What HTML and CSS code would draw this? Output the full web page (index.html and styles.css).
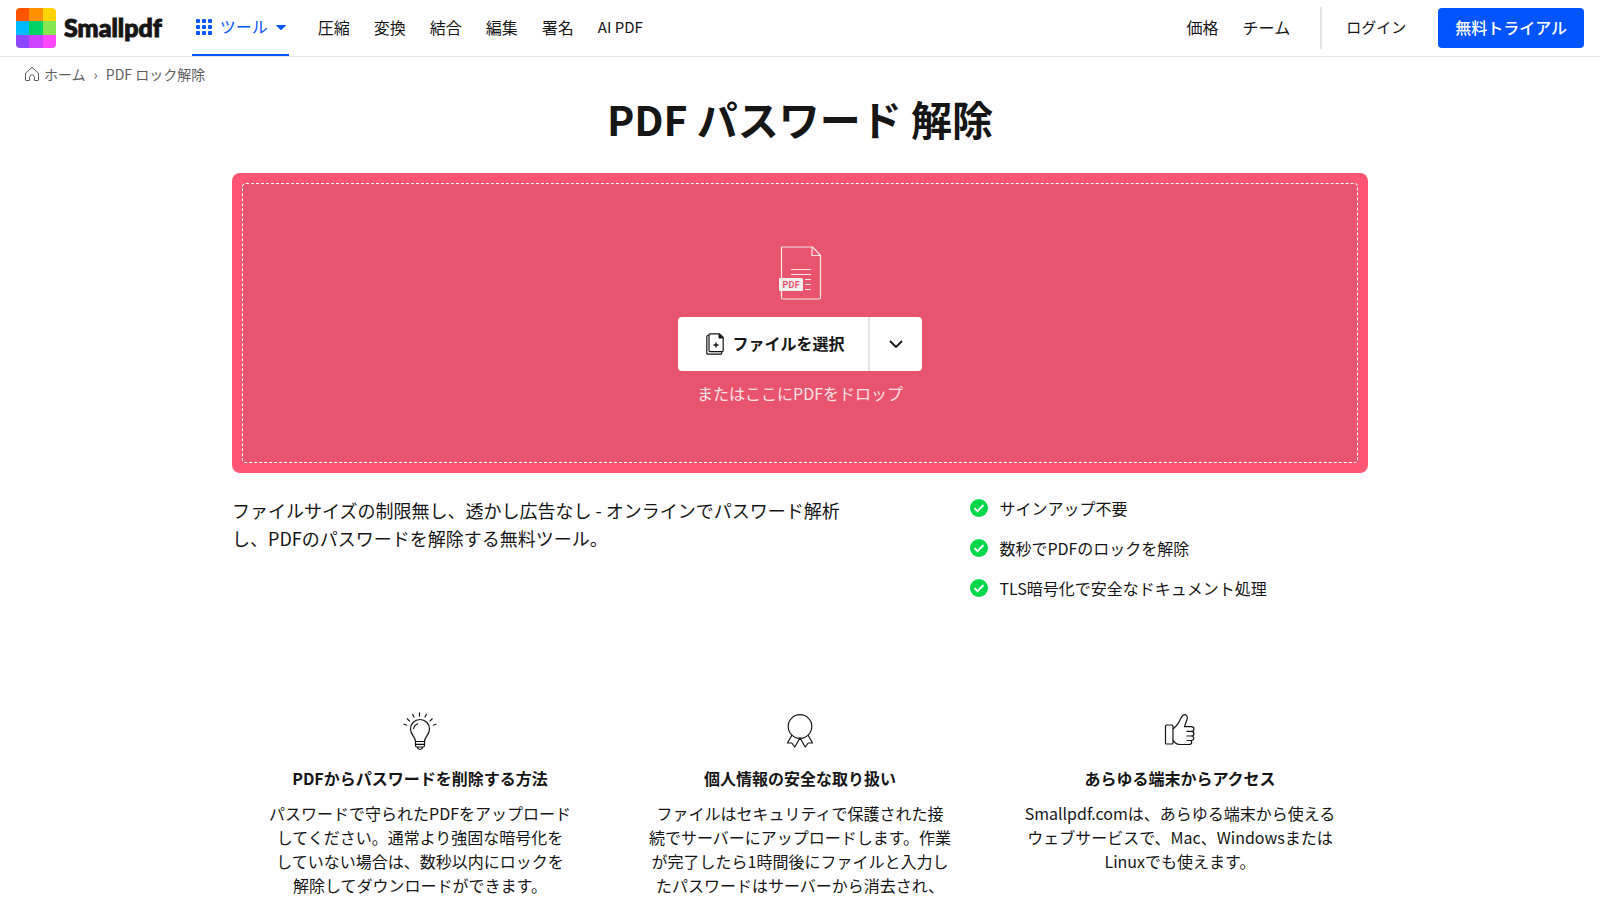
FILE: index.html
```html
<!DOCTYPE html>
<html lang="ja">
<head>
<meta charset="utf-8">
<meta name="viewport" content="width=device-width, initial-scale=1">
<title>PDF パスワード 解除</title>
<link rel="stylesheet" href="styles.css">
</head>
<body>
<header class="header">
  <a class="logo" href="#">
    <svg class="logo-mark" viewBox="0 0 40 40" aria-hidden="true">
      <defs><clipPath id="logo-clip"><rect width="40" height="40" rx="4"/></clipPath></defs>
      <g clip-path="url(#logo-clip)">
        <path fill="#ff5500" d="M0 0h13v13H0z"/><path fill="#ff9100" d="M13 0h14v13H13z"/><path fill="#ffd200" d="M27 0h13v13H27z"/>
        <path fill="#00bbff" d="M0 13h13v14H0z"/><path fill="#00d267" d="M13 13h14v14H13z"/><path fill="#87e650" d="M27 13h13v14H27z"/>
        <path fill="#8c46ff" d="M0 27h13v13H0z"/><path fill="#cd41ff" d="M13 27h14v13H13z"/><path fill="#ff46fa" d="M27 27h13v13H27z"/>
      </g>
    </svg>
    <span class="logo-text">Smallpdf</span>
  </a>
  <nav class="nav" aria-label="メイン">
    <button class="tools" type="button">
      <svg width="16" height="16" viewBox="0 0 16 16" fill="currentColor" aria-hidden="true">
        <rect width="4" height="4" rx="1"/><rect x="6" width="4" height="4" rx="1"/><rect x="12" width="4" height="4" rx="1"/>
        <rect y="6" width="4" height="4" rx="1"/><rect x="6" y="6" width="4" height="4" rx="1"/><rect x="12" y="6" width="4" height="4" rx="1"/>
        <rect y="12" width="4" height="4" rx="1"/><rect x="6" y="12" width="4" height="4" rx="1"/><rect x="12" y="12" width="4" height="4" rx="1"/>
      </svg>
      <span class="tools-label">ツール</span>
      <svg width="10" height="5" viewBox="0 0 10 5" fill="currentColor" aria-hidden="true"><path d="M.5 0h9q.8 0 .2.7L5.500 4.800q-.5.400-1 0L.3.700Q-.3 0 .5 0z"/></svg>
    </button>
    <a href="#">圧縮</a>
    <a href="#">変換</a>
    <a href="#">結合</a>
    <a href="#">編集</a>
    <a href="#">署名</a>
    <a class="ai" href="#">AI PDF</a>
  </nav>
  <div class="account">
    <a href="#">価格</a>
    <a href="#">チーム</a>
    <span class="divider"></span>
    <a class="login" href="#">ログイン</a>
    <a class="trial" href="#">無料トライアル</a>
  </div>
</header>

<nav class="crumbs" aria-label="パンくずリスト">
  <a href="#">
    <svg width="16" height="16" viewBox="0 0 16 16" fill="none" stroke="currentColor" aria-hidden="true"><path d="M1.500 7.200 8 1.500l6.500 5.700v6.800q0 .5-.5.500h-3.500v-3.200a2.500 2.500 0 0 0-5 0v3.200H2q-.5 0-.5-.5z" stroke-linejoin="round"/></svg>
    ホーム</a>
  <span class="crumb-sep">›</span>
  <span>PDF ロック解除</span>
</nav>

<main class="main">
  <h1 class="title">PDF パスワード 解除</h1>

  <section class="drop">
    <div class="drop-inner">
      <svg class="drop-icon" width="44" height="54" viewBox="0 0 44 54" aria-hidden="true">
        <g fill="none" stroke="#f5e6e9" stroke-width="1.200">
          <path d="M3.500 1h31l8 8.500v42q0 1.500-1.500 1.500H5q-1.500 0-1.500-1.500z" stroke-linejoin="round"/>
          <path d="M34 1v8.500h8.500M13 23.500h20M13 28.500h20M27 33.500h6M27 38.500h6M27 43.500h6"/>
        </g>
        <rect x="1" y="32" width="24" height="13" rx="1" fill="#f1eeee"/>
        <text class="icon-label" x="13" y="42" text-anchor="middle">PDF</text>
      </svg>
      <div class="picker">
        <button class="picker-main" type="button">
          <svg width="18" height="22" viewBox="0 0 18 22" fill="none" stroke="currentColor" aria-hidden="true">
            <path d="M4 .8h9.500l3.700 3.800v13q0 1-1 1H4q-1 0-1-1V1.800q0-1 1-1z" stroke-width="1.200"/>
            <path d="M13 1v4h4z" fill="currentColor"/>
            <path d="M3 2.500H1.700q-.9 0-.9 1v16.700q0 1 .9 1h13q1 0 1-1v-1.500" stroke-width="1.200"/>
            <path d="M10 9.500v5M7.500 12h5" stroke-width="1.400"/>
          </svg>
          <span class="picker-label">ファイルを選択</span>
        </button>
        <button class="picker-more" type="button" aria-label="その他のソース">
          <svg width="14" height="8" viewBox="0 0 14 8" fill="none" stroke="currentColor" stroke-width="1.800" aria-hidden="true"><path d="M1 1l6 6 6-6"/></svg>
        </button>
      </div>
      <p class="drop-hint">またはここにPDFをドロップ</p>
    </div>
  </section>

  <section class="intro">
    <p class="lead">ファイルサイズの制限無し、透かし広告なし - オンラインでパスワード解析し、PDFのパスワードを解除する無料ツール。</p>
    <ul class="checks">
      <li><svg width="18" height="18" viewBox="0 0 18 18" aria-hidden="true"><circle cx="9" cy="9" r="9" fill="#00d74b"/><path d="M4.500 9.200l3 3 6-6.200" fill="none" stroke="#fff" stroke-width="1.800"/></svg>サインアップ不要</li>
      <li><svg width="18" height="18" viewBox="0 0 18 18" aria-hidden="true"><circle cx="9" cy="9" r="9" fill="#00d74b"/><path d="M4.500 9.200l3 3 6-6.200" fill="none" stroke="#fff" stroke-width="1.800"/></svg>数秒でPDFのロックを解除</li>
      <li><svg width="18" height="18" viewBox="0 0 18 18" aria-hidden="true"><circle cx="9" cy="9" r="9" fill="#00d74b"/><path d="M4.500 9.200l3 3 6-6.200" fill="none" stroke="#fff" stroke-width="1.800"/></svg>TLS暗号化で安全なドキュメント処理</li>
    </ul>
  </section>

  <section class="features">
    <article class="feature">
      <svg class="feature-icon" viewBox="0 0 40 40" aria-hidden="true">
        <path d="M15.500 30.500c0-4.500-5-6.500-5-12.500a9.500 9.500 0 0 1 19 0c0 6-5 8-5 12.500zM15.500 30.500v4q0 1.500 1.500 1.500h6q1.500 0 1.500-1.500v-4M15.500 33.300h9M17 36q1 2.500 3 2.500t3-2.500M13.500 18q.5-3.500 4.500-5.500M19.500 1.500v4M12.500 3l1.700 3.500M7 7.500l2.800 2.800M3.500 13l3.500 1.200M26.500 3l-1.700 3.500M32.500 7.500l-2.800 2.800M36.500 13 33 14.200"/>
      </svg>
      <h2>PDFからパスワードを削除する方法</h2>
      <p>パスワードで守られたPDFをアップロード<br>してください。通常より強固な暗号化を<br>していない場合は、数秒以内にロックを<br>解除してダウンロードができます。</p>
    </article>
    <article class="feature">
      <svg class="feature-icon" viewBox="0 0 40 40" aria-hidden="true">
        <circle cx="20" cy="15.500" r="11.800"/>
        <path d="M12 24 7.500 32h4.300l3 4L20 27l5.200 9 3-4h4.300L28 24"/>
      </svg>
      <h2>個人情報の安全な取り扱い</h2>
      <p>ファイルはセキュリティで保護された接<br>続でサーバーにアップロードします。作業<br>が完了したら1時間後にファイルと入力し<br>たパスワードはサーバーから消去され、</p>
    </article>
    <article class="feature">
      <svg class="feature-icon" viewBox="0 0 40 40" aria-hidden="true">
        <rect x="5.500" y="14" width="7.500" height="19" rx="1"/>
        <path d="M13 18q5-4 8-11 2-4 4.500-3.300 2.500 1 1.500 4.800l-2.500 7.200H31q3 0 3 2.200 0 2.400-3 2.500h-4.500M31 20.400q3 .1 3 2.300t-3 2.300h-4.500M31 25q2.800.2 2.800 2.300T31 29.500h-4.500M30.500 29.500q1.200.3 1.200 1.800 0 2.200-2.700 2.200H20q-3 0-4.500-1.500L13 29.500"/>
      </svg>
      <h2>あらゆる端末からアクセス</h2>
      <p>Smallpdf.comは、あらゆる端末から使える<br>ウェブサービスで、Mac、Windowsまたは<br>Linuxでも使えます。</p>
    </article>
  </section>
</main>
</body>
</html>
```

FILE: styles.css
```css
* {
  box-sizing: border-box;
}

body {
  margin: 0;
  background: #fff;
  color: #161616;
  font: 16px/24px "Noto Sans CJK JP", sans-serif;
}

a {
  color: inherit;
  text-decoration: none;
}

button {
  padding: 0;
  border: 0;
  background: none;
  color: inherit;
  font: inherit;
  cursor: pointer;
}

h1, h2, p, ul {
  margin: 0;
  padding: 0;
}

.header {
  display: flex;
  align-items: stretch;
  height: 57px;
  padding: 0 16px;
  border-bottom: 1px solid #e4e4e4;
}

.logo {
  display: flex;
  align-items: center;
  gap: 8px;
  margin-right: 30px;
}

.logo-mark {
  width: 40px;
  height: 40px;
}

.logo-text {
  padding-bottom: 2px;
  font: 900 25px/32px Lato, sans-serif;
  -webkit-text-stroke: 1px currentColor;
}

.nav {
  display: flex;
  align-items: center;
  gap: 24px;
}

.nav a {
  padding-bottom: 2px;
}

.nav .ai {
  font-size: 15px;
}

.tools {
  display: flex;
  align-items: center;
  align-self: stretch;
  gap: 8px;
  margin-right: 5px;
  padding: 0 3px 0 4px;
  border-bottom: 2px solid #0055ff;
  color: #0055ff;
}

.tools-label {
  padding-bottom: 2px;
}

.account {
  display: flex;
  align-items: center;
  gap: 24px;
  margin-left: auto;
}

.account a {
  padding-bottom: 2px;
}

.divider {
  width: 2px;
  height: 42px;
  margin-left: 6px;
  background: #e4e4e4;
}

.login {
  margin-right: 8px;
  font-size: 15px;
}

.account .trial {
  padding: 7px 17px 9px;
  border-radius: 4px;
  background: #0055ff;
  color: #fff;
  font-weight: 500;
}

.crumbs {
  display: flex;
  align-items: center;
  gap: 8px;
  padding: 7px 24px 1px;
  color: #5e5e5e;
  font-size: 14px;
  line-height: 20px;
}

.crumbs a {
  display: flex;
  align-items: center;
  gap: 4px;
}

.main {
  max-width: 1136px;
  margin: 0 auto;
}

.title {
  padding: 5px 0 27px;
  font-size: 41px;
  line-height: 56px;
  font-weight: 700;
  text-align: center;
}

.drop {
  padding: 10px;
  border-radius: 8px;
  background: #ff5574;
}

.drop-inner {
  display: flex;
  flex-direction: column;
  align-items: center;
  padding: 62px 16px 57px;
  border: 1px dashed #fff;
  border-radius: 4px;
  background: #e8546e;
}

.icon-label {
  fill: #e8546e;
  font-size: 9px;
  font-weight: 700;
}

.picker {
  display: flex;
  height: 54px;
  margin: 17px 0 10px;
  border-radius: 4px;
  background: #fff;
  overflow: hidden;
}

.picker-main {
  display: flex;
  align-items: center;
  gap: 8px;
  padding: 0 23px 0 28px;
  font-weight: 700;
}

.picker-label {
  padding-bottom: 2px;
}

.picker-more {
  display: grid;
  place-items: center;
  width: 54px;
  border-left: 2px solid #e4e4e4;
}

.drop-hint {
  color: #f8e1e5;
}

.intro {
  display: grid;
  grid-template-columns: 13fr 7fr;
  padding-top: 23px;
}

.lead {
  max-width: 614px;
  font-size: 18px;
  line-height: 28px;
}

.checks {
  display: grid;
  gap: 16px;
  list-style: none;
}

.checks li {
  display: flex;
  align-items: center;
  gap: 11px;
}

.features {
  display: grid;
  grid-template-columns: repeat(3, 1fr);
  gap: 4px;
  padding-top: 111px;
}

.feature {
  display: flex;
  flex-direction: column;
  align-items: center;
  text-align: center;
}

.feature-icon {
  width: 40px;
  height: 40px;
  fill: none;
  stroke: #161616;
  stroke-width: 1.2px;
  stroke-linejoin: round;
}

.feature h2 {
  margin: 15px 0 11px;
  font-size: 16px;
  line-height: 24px;
  font-weight: 700;
}
```
